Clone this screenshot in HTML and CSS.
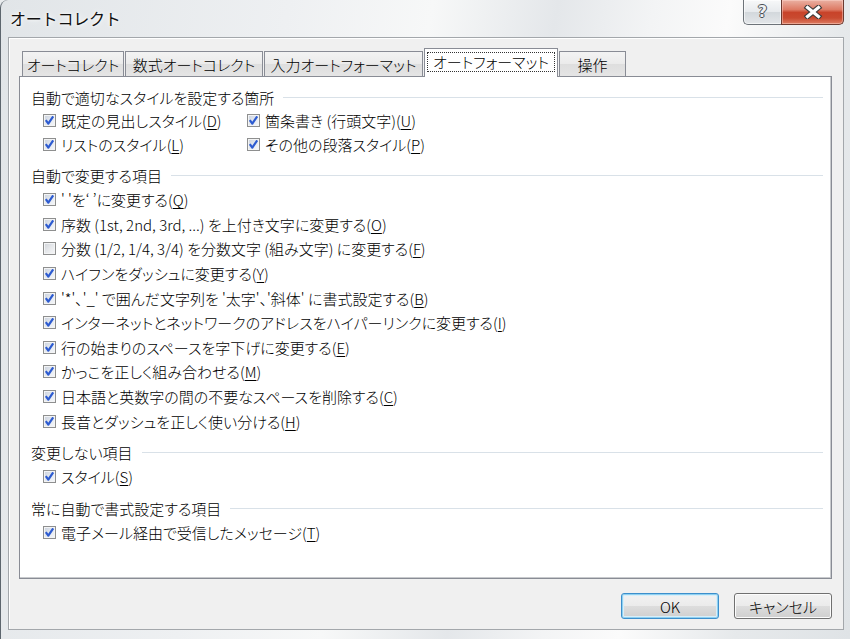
FILE: index.html
```html
<!DOCTYPE html>
<html lang="ja">
<head>
<meta charset="utf-8">
<title>オートコレクト</title>
<link rel="stylesheet" href="styles.css">
</head>
<body>
<div class="window">
  <div class="titlebar">
    <span class="title">オートコレクト</span>
    <div class="caption">
      <div class="cap-help"><span class="help-glyph">?</span></div>
      <div class="cap-close">
        <svg width="20" height="14" viewBox="0 0 20 14">
          <path d="M4.5 2.5 L15.5 11.5 M15.5 2.5 L4.5 11.5" stroke="#3b3b3b" stroke-width="5.4" stroke-linecap="square" fill="none"/>
          <path d="M4.5 2.5 L15.5 11.5 M15.5 2.5 L4.5 11.5" stroke="#ffffff" stroke-width="3.2" stroke-linecap="square" fill="none"/>
        </svg>
      </div>
    </div>
  </div>
  <div class="client">
    <div class="tabs">
      <div class="tab t1">オートコレクト</div>
      <div class="tab t2">数式オートコレクト</div>
      <div class="tab t3">入力オートフォーマット</div>
      <div class="tab t4 active"><span class="focus">オートフォーマット</span></div>
      <div class="tab t5">操作</div>
    </div>
    <div class="panel">
      <div class="sec-head first">自動で適切なスタイルを設定する箇所</div>
      <div class="grid2">
        <div class="row"><span class="cb on"></span>既定の見出しスタイル(<u>D</u>)</div>
        <div class="row"><span class="cb on"></span>箇条書き (行頭文字)(<u>U</u>)</div>
        <div class="row"><span class="cb on"></span>リストのスタイル(<u>L</u>)</div>
        <div class="row"><span class="cb on"></span>その他の段落スタイル(<u>P</u>)</div>
      </div>
      <div class="sec-head">自動で変更する項目</div>
      <div class="list">
        <div class="row"><span class="cb on"></span>' 'を‘ ’に変更する(<u>Q</u>)</div>
        <div class="row"><span class="cb on"></span>序数 (1st, 2nd, 3rd, ...) を上付き文字に変更する(<u>O</u>)</div>
        <div class="row"><span class="cb"></span>分数 (1/2, 1/4, 3/4) を分数文字 (組み文字) に変更する(<u>F</u>)</div>
        <div class="row"><span class="cb on"></span>ハイフンをダッシュに変更する(<u>Y</u>)</div>
        <div class="row"><span class="cb on"></span>'*'、'_' で囲んだ文字列を '太字'、'斜体' に書式設定する(<u>B</u>)</div>
        <div class="row"><span class="cb on"></span>インターネットとネットワークのアドレスをハイパーリンクに変更する(<u>I</u>)</div>
        <div class="row"><span class="cb on"></span>行の始まりのスペースを字下げに変更する(<u>E</u>)</div>
        <div class="row"><span class="cb on"></span>かっこを正しく組み合わせる(<u>M</u>)</div>
        <div class="row"><span class="cb on"></span>日本語と英数字の間の不要なスペースを削除する(<u>C</u>)</div>
        <div class="row"><span class="cb on"></span>長音とダッシュを正しく使い分ける(<u>H</u>)</div>
      </div>
      <div class="sec-head">変更しない項目</div>
      <div class="list">
        <div class="row"><span class="cb on"></span>スタイル(<u>S</u>)</div>
      </div>
      <div class="sec-head">常に自動で書式設定する項目</div>
      <div class="list">
        <div class="row"><span class="cb on"></span>電子メール経由で受信したメッセージ(<u>T</u>)</div>
      </div>
    </div>
    <div class="footer">
      <button class="btn default">OK</button>
      <button class="btn">キャンセル</button>
    </div>
  </div>
</div>
</body>
</html>
```
FILE: styles.css
```css
* { box-sizing: border-box; }
html, body { margin: 0; padding: 0; }
body {
  width: 850px;
  height: 639px;
  overflow: hidden;
  font-family: "Noto Sans CJK JP", "Noto Sans", sans-serif;
  color: #000;
  background: #e9ecee;
}
.window {
  width: 850px;
  height: 639px;
  display: flex;
  flex-direction: column;
  border-left: 1px solid #5d666e;
  border-top-left-radius: 8px;
  background:
    linear-gradient(100deg, #e1e5e8 0%, #eef0f2 30%, #f7f8f8 45%, #e4e7ea 58%, #f3f4f5 68%, #fbfbfb 76%, #e6e9eb 88%, #dfe3e6 100%);
}
.titlebar {
  height: 37px;
  display: flex;
  align-items: flex-start;
  justify-content: space-between;
  padding-left: 9px;
}
.title {
  font-size: 16px;
  line-height: 16px;
  margin-top: 10px;
  color: #111;
  letter-spacing: -0.2px;
  text-shadow: 0 0 6px #fff, 0 0 3px #fff;
}
.caption {
  display: flex;
  margin-right: 6px;
}
.cap-help, .cap-close {
  height: 25px;
  display: flex;
  align-items: center;
  justify-content: center;
  border: 1px solid #6d7379;
  border-top: none;
}
.cap-help {
  width: 38px;
  border-right: none;
  border-bottom-left-radius: 5px;
  background: linear-gradient(#f7f8f9 0%, #e7eaed 48%, #d3d8dc 52%, #e3e6e9 100%);
  box-shadow: inset 0 0 0 1px rgba(255,255,255,0.6);
}
.help-glyph {
  font-family: "DejaVu Sans", sans-serif;
  font-weight: bold;
  font-size: 16px;
  line-height: 16px;
  color: #eef0f2;
  text-shadow: 1px 0 0 #4a4f55, -1px 0 0 #4a4f55, 0 1px 0 #4a4f55, 0 -1px 0 #4a4f55;
}
.cap-close {
  width: 63px;
  border-color: #6b3a30;
  border-bottom-right-radius: 5px;
  background: linear-gradient(#eab1a3 0%, #dd7a64 40%, #c8432a 52%, #c94a30 75%, #de7c62 100%);
  box-shadow: inset 0 0 0 1px rgba(255,220,210,0.45);
}
.client {
  margin: 0 6px 9px 7px;
  flex: 1;
  display: flex;
  flex-direction: column;
  background: #f0f0f0;
  border: 1px solid #a3a7ab;
  box-shadow: inset 1px 1px 0 #ffffff;
  padding: 9px 11px 10px 10px;
  font-size: 15px;
  font-weight: 300;
  font-feature-settings: "palt";
}
.tabs {
  display: flex;
  align-items: flex-end;
  height: 29px;
  padding-left: 3px;
  position: relative;
  z-index: 1;
}
.tab {
  height: 25px;
  margin-right: 1px;
  border: 1px solid #898c95;
  border-bottom: none;
  background: linear-gradient(#f3f3f3 0%, #ebebeb 50%, #dedede 51%, #e5e5e5 100%);
  display: flex;
  align-items: center;
  justify-content: center;
  font-size: 15px;
  white-space: nowrap;
}
.t1 { width: 102px; }
.t2 { width: 138px; }
.t3 { width: 159px; }
.t5 { width: 67px; }
.tab.active {
  width: 134px;
  height: 29px;
  margin-bottom: -1px;
  background: #fff;
  padding-bottom: 2px;
}
.focus {
  border: 1px dotted #333;
  padding: 0 5px;
  line-height: 18px;
}
.panel {
  flex: 1;
  background: #fff;
  border: 1px solid #898c95;
  box-shadow: inset -1px -1px 0 #c8cacd;
  padding: 9.5px 8px 0 11px;
}
.sec-head {
  display: flex;
  align-items: center;
  height: 24px;
  margin-top: 7px;
  white-space: nowrap;
}
.sec-head.first { margin-top: 0; height: 22px; }
.sec-head::after {
  content: "";
  flex: 1;
  height: 1px;
  margin-left: 9px;
  background: #d9e1e8;
}
.grid2 {
  display: grid;
  grid-template-columns: 204px auto;
  padding-left: 12px;
}
.grid2 .row { height: 24px; }
.list { padding-left: 12px; }
.row {
  height: 24.6px;
  display: flex;
  align-items: center;
  white-space: nowrap;
}
.row u { text-underline-offset: 2px; }
.cb {
  flex: none;
  width: 13px;
  height: 13px;
  margin-right: 5px;
  border: 1px solid #8e8f8f;
  background: linear-gradient(135deg, #cfd3d8 0%, #e6e8eb 50%, #f7f7f8 100%);
  box-shadow: inset 0 0 0 1px #f3f4f5;
}
.cb.on {
  background:
    url("data:image/svg+xml,%3Csvg xmlns='http://www.w3.org/2000/svg' width='11' height='11' viewBox='0 0 11 11'%3E%3Cpath d='M1.8 5.2 L4.3 8.6 L9.2 1.4' stroke='%232d5bd0' stroke-width='2.2' fill='none' stroke-linejoin='round'/%3E%3C/svg%3E") center/11px 11px no-repeat,
    linear-gradient(135deg, #c9d0dc 0%, #e3e8ef 50%, #f7f8fa 100%);
}
.footer {
  display: flex;
  justify-content: flex-end;
  gap: 15px;
  padding-top: 14px;
}
.btn {
  width: 98px;
  height: 26px;
  margin: 0;
  padding: 0;
  font-family: "Noto Sans CJK JP", "Noto Sans", sans-serif;
  font-size: 15px;
  font-weight: 300;
  font-feature-settings: "palt";
  color: #000;
  border: 1px solid #707070;
  border-radius: 3px;
  background: linear-gradient(#f2f2f2 0%, #ebebeb 50%, #dddddd 51%, #cfcfcf 100%);
  box-shadow: inset 0 0 0 1px #fcfcfc;
}
.btn.default {
  border-color: #3c8fcc;
  box-shadow: inset 0 0 0 1px #8fd0f0, inset 0 0 0 2px #d8eef9;
}
```
